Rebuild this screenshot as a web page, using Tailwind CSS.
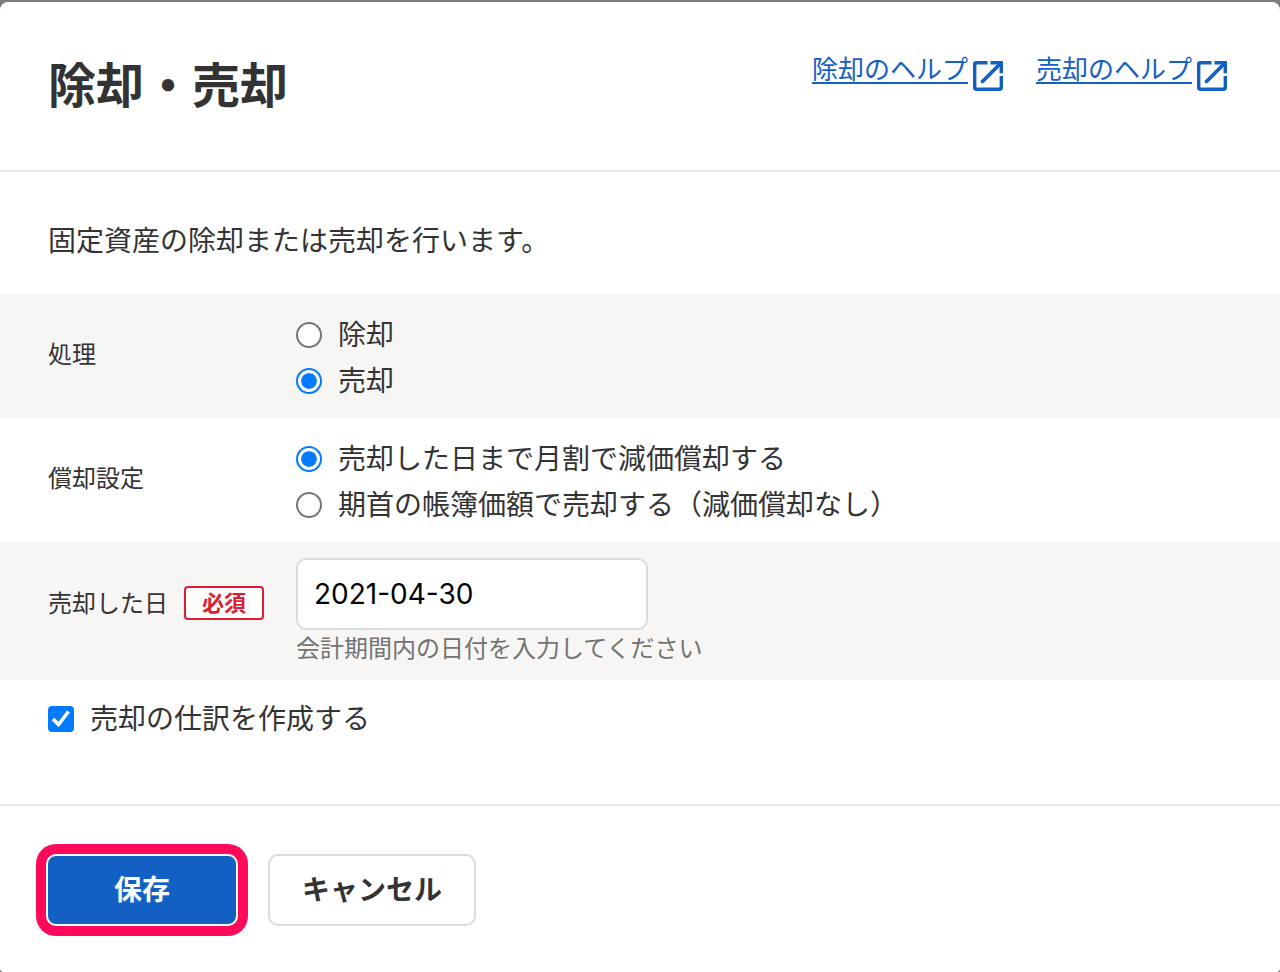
<!DOCTYPE html>
<html lang="ja">

<head>
    <meta charset="UTF-8" />
    <meta name="viewport" content="width=device-width, initial-scale=1.0" />
    <title>除却・売却</title>
    <script src="https://cdn.jsdelivr.net/npm/@tailwindcss/browser@4"></script>
</head>

<body class="bg-[#7e7c7c] pt-[2px] font-['Noto_Sans_CJK_JP',sans-serif] text-[28px] leading-[46px] text-[#333]">

    <form class="flex min-h-[calc(100vh-2px)] flex-col rounded-t-lg rounded-b bg-white">

        <!-- Header -->
        <header class="flex items-start justify-between border-b-2 border-[#e8e8e8] px-12 pt-11 pb-[52px]">
            <h1 class="text-[48px] leading-[72px] font-bold">除却・売却</h1>
            <nav class="flex gap-7 pt-[2px] text-[26px] leading-10 text-[#1360c5]">
                <a href="#" class="flex items-start">
                    <span class="underline decoration-2 underline-offset-[3px]">除却のヘルプ</span>
                    <svg class="mt-2 size-10" viewBox="0 0 40 40" fill="none" stroke="currentColor" stroke-width="3.400" aria-hidden="true">
                        <path d="M19.500 6.700H8.200a1.500 1.500 0 0 0-1.500 1.500v23.600a1.500 1.500 0 0 0 1.500 1.500h23.600a1.500 1.500 0 0 0 1.500-1.500V20" />
                        <path d="M22.500 6.700H33.300V17.300" />
                        <path d="M33 7 14.500 25.500" stroke-width="3.800" stroke-linecap="round" />
                    </svg>
                </a>
                <a href="#" class="flex items-start">
                    <span class="underline decoration-2 underline-offset-[3px]">売却のヘルプ</span>
                    <svg class="mt-2 size-10" viewBox="0 0 40 40" fill="none" stroke="currentColor" stroke-width="3.400" aria-hidden="true">
                        <path d="M19.500 6.700H8.200a1.500 1.500 0 0 0-1.500 1.500v23.600a1.500 1.500 0 0 0 1.500 1.500h23.600a1.500 1.500 0 0 0 1.500-1.500V20" />
                        <path d="M22.500 6.700H33.300V17.300" />
                        <path d="M33 7 14.500 25.500" stroke-width="3.800" stroke-linecap="round" />
                    </svg>
                </a>
            </nav>
        </header>

        <!-- Fields -->
        <main class="grow border-b-2 border-[#e8e8e8] pb-[62px]">
            <p class="px-12 pt-11 pb-8">固定資産の除却または売却を行います。</p>

            <div role="radiogroup" aria-labelledby="processLabel" class="flex items-center bg-[#f7f6f4] px-12 py-4">
                <div id="processLabel" class="w-[248px] shrink-0 pb-[6px] text-[24px]">処理</div>
                <div>
                    <label class="flex items-center gap-4">
                        <input type="radio" name="process" value="retire"
                            class="mt-1 size-[26px] appearance-none rounded-full border-2 border-[#767676] bg-white p-[3px] checked:border-[#007bff] checked:bg-[#007bff] checked:bg-clip-content checked:shadow-[inset_0_0_0_3px_#fff]" />
                        除却
                    </label>
                    <label class="flex items-center gap-4">
                        <input type="radio" name="process" value="sell" checked
                            class="mt-1 size-[26px] appearance-none rounded-full border-2 border-[#767676] bg-white p-[3px] checked:border-[#007bff] checked:bg-[#007bff] checked:bg-clip-content checked:shadow-[inset_0_0_0_3px_#fff]" />
                        売却
                    </label>
                </div>
            </div>

            <div role="radiogroup" aria-labelledby="depreciationLabel" class="flex items-center px-12 py-4">
                <div id="depreciationLabel" class="w-[248px] shrink-0 pb-[6px] text-[24px]">償却設定</div>
                <div>
                    <label class="flex items-center gap-4">
                        <input type="radio" name="depreciation" value="monthly" checked
                            class="mt-1 size-[26px] appearance-none rounded-full border-2 border-[#767676] bg-white p-[3px] checked:border-[#007bff] checked:bg-[#007bff] checked:bg-clip-content checked:shadow-[inset_0_0_0_3px_#fff]" />
                        売却した日まで月割で減価償却する
                    </label>
                    <label class="flex items-center gap-4">
                        <input type="radio" name="depreciation" value="none"
                            class="mt-1 size-[26px] appearance-none rounded-full border-2 border-[#767676] bg-white p-[3px] checked:border-[#007bff] checked:bg-[#007bff] checked:bg-clip-content checked:shadow-[inset_0_0_0_3px_#fff]" />
                        期首の帳簿価額で売却する（減価償却なし）
                    </label>
                </div>
            </div>

            <div class="flex items-center bg-[#f7f6f4] px-12 py-4">
                <label for="soldOn" class="flex w-[248px] shrink-0 items-center gap-4 pb-4 text-[24px]">
                    <span class="pb-[2px]">売却した日</span>
                    <span class="rounded-[4px] border-2 border-[#dc1e32] bg-white px-4 pb-1 text-[22px] leading-[26px] font-bold text-[#dc1e32]">必須</span>
                </label>
                <div>
                    <input id="soldOn" type="text" value="2021-04-30" aria-describedby="soldOnHelp"
                        class="block h-[72px] w-[352px] rounded-[10px] border-2 border-[#dcdcdc] bg-white px-4 font-[Inter,sans-serif] text-[28px] text-black" />
                    <p id="soldOnHelp" class="text-[24px] leading-[34px] text-[#737373]">会計期間内の日付を入力してください</p>
                </div>
            </div>

            <label class="flex items-center gap-4 px-12 pt-[14px]">
                <span class="mt-1 grid size-[26px]">
                    <input type="checkbox" checked
                        class="peer col-start-1 row-start-1 size-[26px] appearance-none rounded-[4px] border-2 border-[#767676] bg-white checked:border-[#007bff] checked:bg-[#007bff]" />
                    <svg class="pointer-events-none invisible col-start-1 row-start-1 size-[26px] peer-checked:visible" viewBox="0 0 26 26" fill="none" stroke="#fff" stroke-width="3.600" aria-hidden="true">
                        <path d="M5 13 10.500 18.500 20.500 5.500" />
                    </svg>
                </span>
                売却の仕訳を作成する
            </label>
        </main>

        <!-- Footer -->
        <footer class="flex gap-[30px] px-[46px] pt-12 pb-[46px]">
            <button type="submit"
                class="h-[72px] w-[192px] rounded-[10px] border-2 border-white bg-[#1360c5] pb-1 font-bold text-white ring-[10px] ring-[#ff0a5a]">保存</button>
            <button type="button"
                class="h-[72px] rounded-[10px] border-2 border-[#dcdcdc] bg-white px-8 pb-1 font-bold">キャンセル</button>
        </footer>
    </form>

</body>

</html>
